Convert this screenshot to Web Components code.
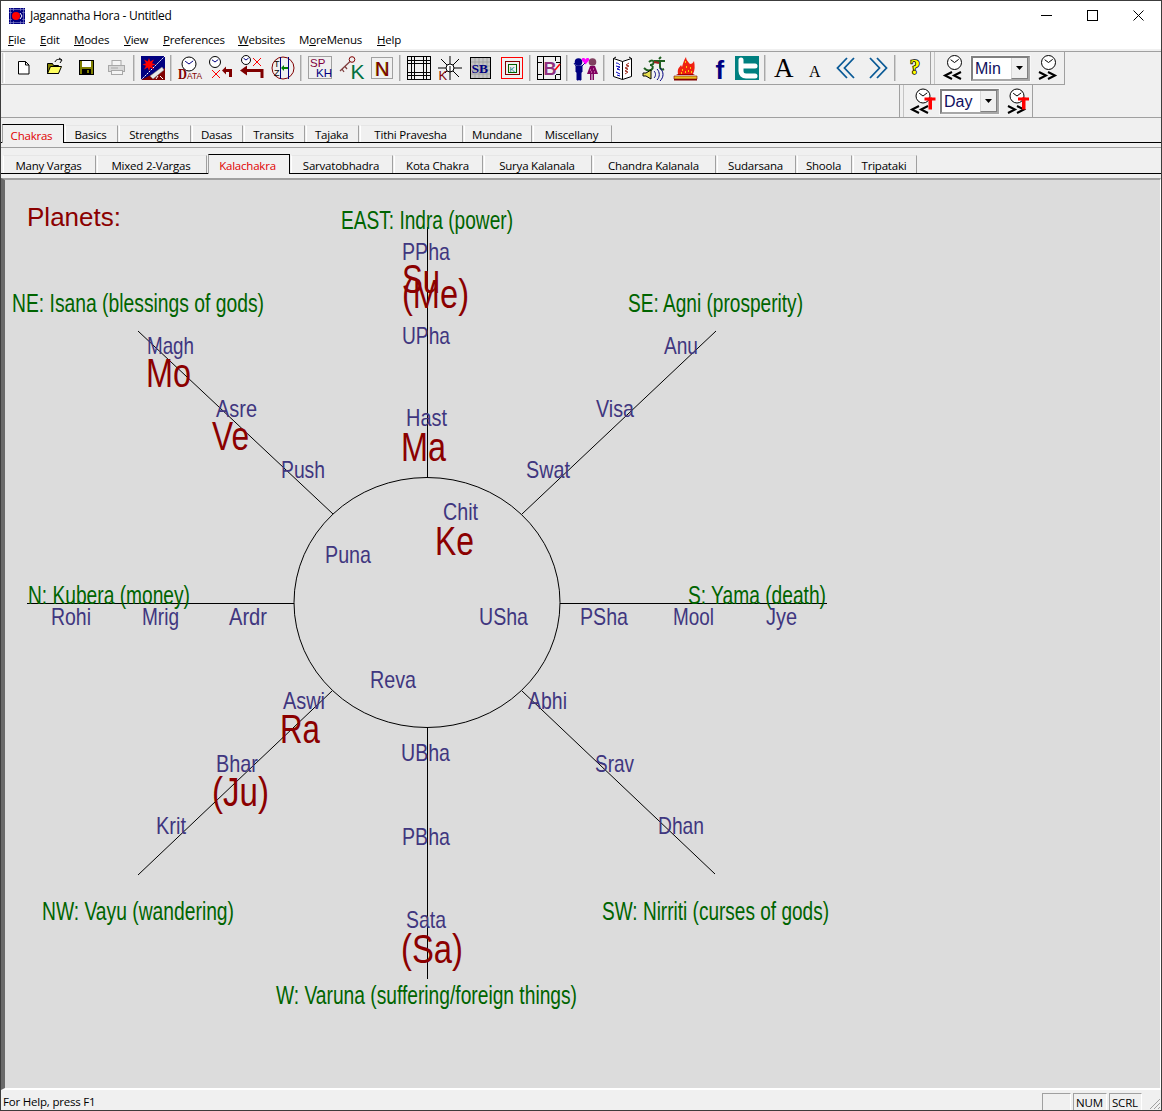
<!DOCTYPE html>
<html>
<head>
<meta charset="utf-8">
<title>Jagannatha Hora - Untitled</title>
<style>
html, body { margin: 0; padding: 0; background: #f0f0f0; overflow: hidden; }
body { font-family: "Open Sans", "Noto Sans", sans-serif; font-size: 11.5px; color: #000; }
</style>
</head>
<body>
<jh-window>
	<jh-titlebar slot="top">Jagannatha Hora - Untitled</jh-titlebar>
	<jh-menubar slot="top">
		<jh-menu width="18"><u>F</u>ile</jh-menu>
		<jh-menu width="20"><u>E</u>dit</jh-menu>
		<jh-menu width="36"><u>M</u>odes</jh-menu>
		<jh-menu width="25"><u>V</u>iew</jh-menu>
		<jh-menu width="61"><u>P</u>references</jh-menu>
		<jh-menu width="47"><u>W</u>ebsites</jh-menu>
		<jh-menu width="64">M<u>o</u>reMenus</jh-menu>
		<jh-menu width="25"><u>H</u>elp</jh-menu>
	</jh-menubar>
	<jh-toolbars slot="top">
		<jh-toolrow style="width:1063px">
			<jh-grip></jh-grip>
			<jh-btn icon="new"></jh-btn><jh-btn icon="open"></jh-btn><jh-btn icon="save"></jh-btn><jh-btn icon="print"></jh-btn>
			<jh-sep></jh-sep>
			<jh-btn icon="astro"></jh-btn>
			<jh-sep></jh-sep>
			<jh-btn icon="data"></jh-btn><jh-btn icon="clockx"></jh-btn><jh-btn icon="clockarrow"></jh-btn><jh-btn icon="tz"></jh-btn>
			<jh-sep></jh-sep>
			<jh-btn icon="spkh"></jh-btn><jh-btn icon="key"></jh-btn><jh-btn icon="n"></jh-btn>
			<jh-sep></jh-sep>
			<jh-btn icon="grid"></jh-btn><jh-btn icon="sun"></jh-btn><jh-btn icon="sb"></jh-btn><jh-btn icon="kbox"></jh-btn>
			<jh-sep></jh-sep>
			<jh-btn icon="bgrid"></jh-btn>
			<jh-sep></jh-sep>
			<jh-btn icon="couple"></jh-btn>
			<jh-sep></jh-sep>
			<jh-btn icon="book"></jh-btn><jh-btn icon="om"></jh-btn><jh-btn icon="fire"></jh-btn><jh-btn icon="fb"></jh-btn><jh-btn icon="tw"></jh-btn>
			<jh-sep></jh-sep>
			<jh-btn icon="abig"></jh-btn><jh-btn icon="asmall"></jh-btn><jh-btn icon="prev"></jh-btn><jh-btn icon="next"></jh-btn>
			<jh-sep></jh-sep>
			<jh-btn icon="help"></jh-btn>
			<jh-dblgrip></jh-dblgrip>
			<jh-btn icon="clockback" narrow></jh-btn>
			<jh-combo>Min</jh-combo>
			<jh-btn icon="clockfwd" narrow></jh-btn>
		</jh-toolrow>
		<jh-toolrow style="width:1029px;padding-right:2px;justify-content:flex-end">
			<jh-dblgrip></jh-dblgrip>
			<jh-btn icon="tback" narrow></jh-btn>
			<jh-combo>Day</jh-combo>
			<jh-btn icon="tfwd" narrow></jh-btn>
		</jh-toolrow>
	</jh-toolbars>
	<jh-tabs slot="top" level="1">
		<jh-tab width="62" active>Chakras</jh-tab>
		<jh-tab width="53">Basics</jh-tab>
		<jh-tab width="72">Strengths</jh-tab>
		<jh-tab width="51">Dasas</jh-tab>
		<jh-tab width="61">Transits</jh-tab>
		<jh-tab width="53">Tajaka</jh-tab>
		<jh-tab width="103">Tithi Pravesha</jh-tab>
		<jh-tab width="68">Mundane</jh-tab>
		<jh-tab width="79">Miscellany</jh-tab>
	</jh-tabs>
	<jh-tabs slot="top" level="2">
		<jh-tab width="93">Many Vargas</jh-tab>
		<jh-tab width="110">Mixed 2-Vargas</jh-tab>
		<jh-tab width="82" active>Kalachakra</jh-tab>
		<jh-tab width="102">Sarvatobhadra</jh-tab>
		<jh-tab width="89">Kota Chakra</jh-tab>
		<jh-tab width="108">Surya Kalanala</jh-tab>
		<jh-tab width="123">Chandra Kalanala</jh-tab>
		<jh-tab width="79">Sudarsana</jh-tab>
		<jh-tab width="55">Shoola</jh-tab>
		<jh-tab width="64">Tripataki</jh-tab>
	</jh-tabs>
	<jh-chart></jh-chart>
	<jh-statusbar slot="bottom">For Help, press F1</jh-statusbar>
</jh-window>

<script>
// small helpers for the toolbar pictures
function clock(cx, cy, r, hands) {
	return `<circle cx="${cx}" cy="${cy}" r="${r}" fill="#fff" stroke="#000"/>` +
		`<path d="M${cx} ${cy}L${cx + r * 0.6} ${cy - r * 0.45}M${cx} ${cy}L${cx - r * 0.55} ${cy - r * 0.4}" stroke="${hands || "#000"}" fill="none"/>`;
}
function redX(cx, cy, s) {
	return `<path d="M${cx - s} ${cy - s}L${cx + s} ${cy + s}M${cx + s} ${cy - s}L${cx - s} ${cy + s}" stroke="#f00" fill="none"/>`;
}
function chev(x, y, dir) {
	let w = 7, h = 3.5, d = dir < 0
		? `M${x + w} ${y}L${x} ${y + h}L${x + w} ${y + 2 * h}`
		: `M${x} ${y}L${x + w} ${y + h}L${x} ${y + 2 * h}`;
	return `<path d="${d}" stroke="#000" stroke-width="2" fill="none"/>`;
}
function redT(x, y) {
	return `<rect x="${x}" y="${y}" width="11" height="3" fill="#f00"/><rect x="${x + 4}" y="${y}" width="3.5" height="12" fill="#f00"/>`;
}
const txt = (x, y, size, fill, s, extra) =>
	`<text x="${x}" y="${y}" font-size="${size}" fill="${fill}" font-family="Liberation Sans, sans-serif" ${extra || ""}>${s}</text>`;

const ICONS = {
	new: `<path d="M7.5 5.5h7l3.5 3.5v9h-10.500z" fill="#fff" stroke="#000"/><path d="M14.500 5.500v3.500h3.500" fill="none" stroke="#000"/>`,
	open: `<path d="M5.500 7.500h5l1 2h5v8h-11z" fill="#808000" stroke="#000"/><path d="M5.500 17.500l3-7h11l-3 7z" fill="#ffff60" stroke="#000"/><path d="M13 6c1-3 4-3 6-2M17 2l3 2-2 3" fill="none" stroke="#000"/>`,
	save: `<rect x="6.500" y="4.500" width="14" height="14" fill="#808000" stroke="#000"/><rect x="9" y="5" width="9" height="6" fill="#fff"/><rect x="9" y="13" width="9" height="5" fill="#000"/><rect x="14" y="14" width="2" height="3" fill="#808000"/>`,
	print: `<rect x="8" y="4.500" width="9" height="5" fill="#f4f4f4" stroke="#a8a8a8"/><rect x="4.500" y="9.500" width="16" height="6" fill="#d8d8d8" stroke="#a8a8a8"/><rect x="7.500" y="14.500" width="11" height="4" fill="#f4f4f4" stroke="#a8a8a8"/><path d="M7 12h7" stroke="#a8a8a8"/>`,
	astro: `<rect width="24" height="24" fill="#000080"/><path d="M24 12V24H0z" fill="#800000"/><path d="M24 0L0 24" stroke="#fff" stroke-dasharray="2 1" fill="none"/>
		<path d="M8 2l1.200 3.500 3.800-2-2 3.800 3.500 1.200-3.500 1.200 2 3.800-3.800-2L8 15l-1.200-3.500-3.800 2 2-3.800L1.500 8.500 5 7.300l-2-3.800 3.800 2z" fill="#f00"/>
		<path d="M9 20l12-9 2 3-11 9z" fill="#e8e8e8" stroke="#777" stroke-width=".5"/><path d="M17 20l-2 3M19 20l3 3" stroke="#fff" fill="none"/>`,
	data: clock(11, 8, 7, "#000080") +
		`<text x="0" y="22.500" textLength="24" lengthAdjust="spacingAndGlyphs" font-family="Liberation Serif, serif" font-weight="bold" fill="#800000" font-size="14">D<tspan font-size="9.500" font-family="Liberation Sans, sans-serif" font-weight="normal">ATA</tspan></text>`,
	clockx: clock(6, 6, 5.500, "#000080") + redX(7, 18, 4) +
		`<path d="M21.500 21V14.500H15" stroke="#800000" stroke-width="3" fill="none"/><path d="M17 10.500v8l-4-4z" fill="#800000"/>`,
	clockarrow: clock(6, 4, 4.500, "#000080") + redX(17, 6, 4) +
		`<path d="M22 22V14.500H5" stroke="#800000" stroke-width="3" fill="none"/><path d="M7 9.500v10L0 14.500z" fill="#800000"/>`,
	tz: `<circle cx="12" cy="12" r="11" fill="none" stroke="#800000"/><path d="M9.500 1v22M17.500 1v22" stroke="#000080" fill="none"/><path d="M11 12h6" stroke="#008000" stroke-width="2"/><path d="M13 9v6l-3-3z" fill="#008000"/>` +
		txt(3, 10.500, 9, "#000", "T") + txt(3, 20, 9, "#000", "Z"),
	spkh: `<rect x=".5" y=".5" width="23" height="22" fill="#f0f0f0" stroke="#a0a0a0"/>` +
		txt(2, 11, 11.500, "#800040", "SP") + txt(8, 20.500, 11.500, "#000080", "KH"),
	key: `<circle cx="13" cy="3.500" r="2.800" fill="none" stroke="#800000"/><path d="M11 5.500L1 15M3 13l2 3M6 10.500l2 2.500" stroke="#804040" stroke-width="1.300" fill="none"/>` +
		txt(11.500, 23, 21, "#007040", "K"),
	n: `<rect x="1.500" y="1.500" width="21" height="21" fill="#f0f0f0" stroke="#a0a0a0"/>` +
		txt(4.500, 19.500, 20, "#808000", "N") + txt(5.300, 19.500, 20, "#800000", "N"),
	grid: `<rect x=".5" y=".5" width="23" height="23" fill="none" stroke="#000"/><rect x="7.500" y="7.500" width="9" height="9" fill="none" stroke="#000"/>
		<path d="M4.500 0V24M19.500 0V24M0 4.500H24M0 19.500H24M7.500 0V7M16.500 0V7M7.500 17V24M16.500 17V24M0 7.500H7M0 16.500H7M17 7.500H24M17 16.500H24" stroke="#000" fill="none"/>`,
	sun: `<circle cx="12" cy="12" r="4" fill="#fff" stroke="#000"/><path d="M12 8V0M12 16V10M12 16V24M16 12H24M8 12H0M15 9L21 3M9 9L3 3M15 15L21 21M9 15L7 17" stroke="#000" fill="none"/>` +
		txt(.5, 24, 13, "#800000", "K"),
	sb: `<rect x="1.500" y="1.500" width="20" height="21" fill="#c4c4c4" stroke="#000"/><path d="M2 6H21M2 10H21M2 14H21M2 18H21M6 2V22M10 2V22M14 2V22M18 2V22" stroke="#9a9a9a" stroke-width=".7"/>` +
		`<text x="2.500" y="16.500" font-family="Liberation Serif, serif" font-weight="bold" font-size="13.500" fill="#000080">SB</text>`,
	kbox: `<rect x="1.500" y="1.500" width="21" height="21" fill="none" stroke="#f00" stroke-width="1"/><rect x="5.500" y="5.500" width="14" height="13" fill="none" stroke="#800000"/><rect x="8.500" y="8.500" width="8" height="8" fill="none" stroke="#006000"/>` +
		txt(9.500, 15.500, 8, "#008080", "K"),
	bgrid: `<rect x=".5" y=".5" width="23" height="23" fill="none" stroke="#000"/><path d="M6.500 0V24M18.500 0V5M0 6.500H5M19 6.500H24M0 18.500H5M19 18.500H24M18.500 19V24" stroke="#000" fill="none"/>` +
		txt(6.500, 18.500, 18, "#903080", "B", 'font-weight="bold"') + `<path d="M18 14l5-6" stroke="#f00" stroke-width="1.500"/>`,
	couple: `<circle cx="4.500" cy="6" r="3.800" fill="#000080"/><path d="M2 10h6v6h-1v8h-1.500v-7h-1v7H3v-8H2zM2 10L0 7M8 10l3-3" fill="#000080" stroke="#000080"/>
		<path d="M11.500 3.500c-1.500-3-5.500-1-3 1.500l3 3.500 3-3.500c2.500-2.500-1.500-4.500-3-1.500z" fill="#f0f"/>
		<circle cx="18.500" cy="6" r="3.800" fill="#804060"/><path d="M16 10h5l3 8h-4v6h-1.500v-6h-1v6H16v-6h-3z" fill="#800060"/><path d="M16 14h1M19 13h1M17 16h1M20 16h1" stroke="#f0a0d0"/>`,
	book: `<path d="M2.500 2.500l9 3 9-3v18l-9 3-9-3z" fill="#fff" stroke="#000"/><path d="M11.500 5.500v18M2.500 2.500L5 1M20.500 2.500L18 1" stroke="#000" fill="none"/>
		<path d="M5 7c2 0 3 1 4 2M5 10l4 1-3 2 3 1M5 16l4 2M6 19l3 1" stroke="#0000c0" fill="none"/><path d="M18 7l-3 2 3 1-4 2 3 1-3 2 3 1-3 2" stroke="#a03020" fill="none"/>`,
	om: `<path d="M7 6c3-3 6-1 4 2-1 1-3 1-3 1 3 0 4 3 1 5-2 1-5 0-7-2M12 5h11M18 5v6c0 2 2 3 4 2M17 3l2-2" stroke="#206020" stroke-width="2" fill="none"/><path d="M12 6l5 1" stroke="#a02020" stroke-width="2"/>
		<path d="M1 17h3l5-3v9l-5-3H1z" fill="#e8e050" stroke="#000"/><path d="M12 15c2 2 2 5 0 7M15 13c3 3 3 8 0 11M18 12c4 4 4 9 0 13" stroke="#000080" fill="none"/>`,
	fire: `<path d="M1 23h23v1.500H1z" fill="#800000"/><path d="M1 20h23v3H1z" fill="#e8c020" stroke="#800000" stroke-width=".6"/><path d="M3 19l4-2h11l4 2z" fill="#a00000"/>
		<path d="M5 18c-1-6 2-7 3-9l1 2c1-4 2-7 4-10 0 3 2 4 3 6l1 1c2 0 3-1 4-3 1 5 1 9-1 13z" fill="#f02010"/><path d="M9 14h1M13 11h1M15 15h1M12 16h1M17 12h1M12 6h1M8 17h1M18 16h1" stroke="#ff0" stroke-width="1.500"/>`,
	fb: `<text x="11.500" y="23" font-family="Liberation Sans, sans-serif" font-weight="bold" font-size="26" fill="#000080">f</text>`,
	tw: `<rect width="24" height="24" fill="#008080"/><path d="M6 4v11c0 3 2 5 5 5h9" stroke="#fff" stroke-width="5" stroke-linecap="round" fill="none"/><path d="M7 10h13" stroke="#fff" stroke-width="5" stroke-linecap="round" fill="none"/>`,
	abig: `<text x="2" y="21" font-family="Liberation Serif, serif" font-size="27" fill="#000">A</text>`,
	asmall: `<text x="6" y="21" font-family="Liberation Serif, serif" font-size="16" fill="#000">A</text>`,
	prev: `<path d="M13 2L3.500 12 13 22M20 2L10.500 12 20 22" stroke="#0a5a96" stroke-width="1.800" fill="none"/>`,
	next: `<path d="M5 2l9.500 10L5 22M12 2l9.500 10L12 22" stroke="#0a5a96" stroke-width="1.800" fill="none"/>`,
	help: `<text x="8" y="18" font-family="Liberation Serif, serif" font-weight="bold" font-size="20" fill="#ff0" stroke="#000" stroke-width="1.600" paint-order="stroke">?</text>`,
	clockback: clock(12.500, 6.500, 7) + chev(3, 16, -1) + chev(12, 16, -1),
	clockfwd: clock(12.500, 6.500, 7) + chev(3, 16, 1) + chev(12, 16, 1),
	tback: clock(12, 7, 7) + chev(1, 17, -1) + chev(10, 17, -1) + redT(13.500, 8.500),
	tfwd: clock(12, 7, 7) + chev(3, 17, 1) + chev(12, 17, 1) + redT(13, 8.500)
};

class JhWindow extends HTMLElement {
	constructor() {
		super();
		this.attachShadow({ mode: "open" }).innerHTML = `
			<style>
			:host { display: flex; flex-direction: column; box-sizing: border-box; width: 1162px; height: 1111px; border: 1px solid #3c3c3c; background: #f0f0f0; }
			.main { flex: 1; min-height: 0; display: flex; }
			</style>
			<slot name="top"></slot>
			<div class="main"><slot></slot></div>
			<slot name="bottom"></slot>`;
	}
}

class JhTitlebar extends HTMLElement {
	constructor() {
		super();
		this.attachShadow({ mode: "open" }).innerHTML = `
			<style>
			:host { display: flex; align-items: center; height: 29px; background: #fff; font-size: 12px; }
			svg { display: block; }
			.logo { margin: 0 5px 0 8px; }
			.title { flex: 1; letter-spacing: -.26px; }
			.ctl { width: 46px; height: 29px; display: flex; align-items: center; justify-content: center; }
			</style>
			<svg class="logo" width="16" height="16" viewBox="0 0 16 16">
				<rect width="16" height="16" fill="#000080"/>
				<path d="M1.500 0V16M4.500 0V16M11.500 0V16M14.500 0V16M0 1.500H16M0 4.500H16M0 11.500H16M0 14.500H16" stroke="#9090d0" stroke-width=".6"/>
				<rect x="3" y="3" width="10" height="10" fill="#000080"/>
				<circle cx="7" cy="8" r="4" fill="#f00"/><path d="M11 5l2 3-2 3" stroke="#fff" fill="none"/>
			</svg>
			<span class="title"><slot></slot></span>
			<span class="ctl"><svg width="11" height="11"><path d="M0 5.500H11" stroke="#000"/></svg></span>
			<span class="ctl"><svg width="11" height="11"><rect x=".5" y=".5" width="10" height="10" fill="none" stroke="#000"/></svg></span>
			<span class="ctl"><svg width="11" height="11"><path d="M.5 .5L10.500 10.500M10.500 .5L.5 10.500" stroke="#000"/></svg></span>`;
	}
}

class JhMenubar extends HTMLElement {
	constructor() {
		super();
		this.attachShadow({ mode: "open" }).innerHTML = `
			<style>:host { display: flex; gap: 14px; height: 19px; padding-left: 7px; background: #fff; font-size: 11.500px; letter-spacing: -.2px; line-height: 20px; }</style>
			<slot></slot>`;
	}
}

class JhMenu extends HTMLElement {
	constructor() {
		super();
		this.attachShadow({ mode: "open" }).innerHTML = `<style>:host { display: block; white-space: nowrap; }</style><slot></slot>`;
	}
	connectedCallback() { this.style.width = this.getAttribute("width") + "px"; }
}

class JhToolbars extends HTMLElement {
	constructor() {
		super();
		this.attachShadow({ mode: "open" }).innerHTML = `
			<style>:host { display: block; padding-top: 2px; }
			.wrap { border-top: 1px solid #a0a0a0; border-bottom: 1px solid #a0a0a0; }</style>
			<div class="wrap"><slot></slot></div>`;
	}
}

class JhToolrow extends HTMLElement {
	constructor() {
		super();
		this.attachShadow({ mode: "open" }).innerHTML = `
			<style>:host { display: flex; align-items: center; box-sizing: content-box; height: 32px; border-right: 1px solid #a0a0a0; }
			:host(:first-child) { border-bottom: 1px solid #a0a0a0; }</style>
			<slot></slot>`;
	}
}

class JhGrip extends HTMLElement {
	constructor() {
		super();
		this.attachShadow({ mode: "open" }).innerHTML = `
			<style>:host { display: block; width: 3px; height: 30px; margin: 0 2px 0 1px; border-left: 1px solid #c8c8c8; border-right: 1px solid #fff; box-sizing: border-box; }</style>`;
	}
}

class JhDblgrip extends HTMLElement {
	constructor() {
		super();
		this.attachShadow({ mode: "open" }).innerHTML = `
			<style>:host { display: block; box-sizing: border-box; width: 5px; height: 32px; margin: 0 5px 0 1px; border-left: 1px solid #a0a0a0; border-right: 1px solid #c4c4c4; }</style>`;
	}
}

class JhSep extends HTMLElement {
	constructor() {
		super();
		this.attachShadow({ mode: "open" }).innerHTML = `
			<style>:host { display: block; box-sizing: border-box; width: 2px; height: 26px; margin: 0 2px; background: #a8a8a8; border-right: 1px solid #d0d0d0; }</style>`;
	}
}

class JhBtn extends HTMLElement {
	constructor() {
		super();
		this.attachShadow({ mode: "open" }).innerHTML = `
			<style>
			:host { display: flex; align-items: center; justify-content: center; width: 31px; height: 32px; flex: none; }
			:host([narrow]) { width: 27px; }
			svg { display: block; overflow: visible; }
			</style>
			<svg width="24" height="24" viewBox="0 0 24 24"></svg>`;
	}
	connectedCallback() {
		this.shadowRoot.querySelector("svg").innerHTML = ICONS[this.getAttribute("icon")] || "";
	}
}

class JhCombo extends HTMLElement {
	constructor() {
		super();
		this.attachShadow({ mode: "open" }).innerHTML = `
			<style>
			:host { display: flex; box-sizing: border-box; flex: none; width: 59px; height: 25px; margin: 0 4px; background: #fff; border: 2px solid #808080; border-right-color: #a8a8a8; border-bottom-color: #a8a8a8; outline: 1px solid #f8f8f8; font: 16px "Liberation Sans", Arial, sans-serif; color: #101060; }
			.v { flex: 1; padding-left: 2px; line-height: 21px; }
			.b { width: 17px; display: flex; align-items: center; justify-content: center; background: #f0f0f0; border-left: 1px solid #d8d8d8; border-bottom: 1px solid #808080; border-right: 1px solid #808080; box-sizing: border-box; }
			</style>
			<span class="v"><slot></slot></span>
			<span class="b"><svg width="7" height="4"><path d="M0 0H7L3.500 4z" fill="#000"/></svg></span>`;
	}
}

class JhTabs extends HTMLElement {
	constructor() {
		super();
		this.attachShadow({ mode: "open" }).innerHTML = `
			<style>
			:host { display: block; letter-spacing: -.22px; }
			:host([level="2"]) { margin: 4px 0; border-top: 1px solid #a0a0a0; }
			.strip { display: flex; align-items: flex-end; box-sizing: content-box; border-bottom: 1px solid #000; }
			:host([level="1"]) .strip { height: 24px; padding-left: 1px; }
			:host([level="2"]) .strip { height: 25px; padding-left: 2px; }
			</style>
			<div class="strip"><slot></slot></div>`;
	}
}

class JhTab extends HTMLElement {
	constructor() {
		super();
		this.attachShadow({ mode: "open" }).innerHTML = `
			<style>
			:host { display: block; box-sizing: border-box; flex: none; height: 17px; margin-right: 1px; padding: 1px 2px 0 0; overflow: hidden; text-align: center; white-space: nowrap; border-top: 1px solid #e6e6e6; border-left: 1px solid #fff; border-right: 1px solid #a0a0a0; line-height: 16px; }
			:host([active]) { height: 19px; margin-bottom: -1px; border-top-color: #000; border-right-color: #000; border-left-color: #a0a0a0; background: #f0f0f0; color: #e00000; padding-top: 3px; padding-right: 3px; }
			:host-context(jh-tabs[level="2"]) { height: 18px; padding-top: 2px; }
			:host-context(jh-tabs[level="2"]):host([active]) { height: 20px; padding-top: 3px; }
			</style>
			<slot></slot>`;
	}
	connectedCallback() { this.style.width = this.getAttribute("width") + "px"; }
}

// every coordinate below is in page pixels, the viewBox takes care of the offset
const GREEN = [
	["EAST: Indra (power)", 341, 229, 172], ["NE: Isana (blessings of gods)", 12, 312, 252],
	["SE: Agni (prosperity)", 628, 312, 175], ["N: Kubera (money)", 28, 604, 162],
	["S: Yama (death)", 688, 604, 138], ["NW: Vayu (wandering)", 42, 920, 192],
	["SW: Nirriti (curses of gods)", 602, 920, 227], ["W: Varuna (suffering/foreign things)", 276, 1004, 301]
];
const STARS = [
	["PPha", 402, 260, 48], ["UPha", 402, 344, 48], ["Hast", 406, 426, 41], ["Chit", 443, 520, 35],
	["Puna", 325, 563, 46], ["USha", 479, 625, 49], ["Reva", 370, 688, 46], ["UBha", 401, 761, 49],
	["PBha", 402, 845, 48], ["Sata", 406, 928, 40], ["Magh", 147, 354, 47], ["Asre", 216, 417, 41],
	["Push", 281, 478, 44], ["Anu", 664, 354, 34], ["Visa", 596, 417, 38], ["Swat", 526, 478, 44],
	["Rohi", 51, 625, 40], ["Mrig", 142, 625, 37], ["Ardr", 229, 625, 38], ["PSha", 580, 625, 48],
	["Mool", 673, 625, 41], ["Jye", 766, 625, 31], ["Aswi", 283, 709, 42], ["Bhar", 216, 772, 42],
	["Krit", 156, 834, 30], ["Abhi", 528, 709, 39], ["Srav", 595, 772, 39], ["Dhan", 658, 834, 46]
];
const PLANETS = [
	["Mo", 146, 387, 45], ["Ve", 212, 450, 37], ["Su", 402, 293, 38], ["(Me)", 402, 308, 67],
	["Ma", 401, 461, 45], ["Ke", 435, 555, 39], ["Ra", 280, 743, 40], ["(Ju)", 212, 806, 57], ["(Sa)", 401, 963, 62]
];
const LINES = [
	[427.5, 227, 427.5, 477], [427.5, 728, 427.5, 979], [27, 603.5, 294, 603.5], [560, 603.5, 827, 603.5],
	[333, 514, 138, 331], [522, 514, 716, 331], [332, 691, 138, 875], [522, 691, 715, 874]
];

class JhChart extends HTMLElement {
	constructor() {
		super();
		this.attachShadow({ mode: "open" }).innerHTML = `
			<style>
			:host { display: block; flex: 1; min-width: 0; box-sizing: border-box; background: #dcdcdc; border-top: 2px solid #a0a0a0; border-left: 4px solid #6a6a6a; border-right: 1px solid #fff; border-bottom: 2px solid #fff; overflow: hidden; }
			svg { display: block; }
			text { font-family: "Liberation Sans", Arial, sans-serif; }
			</style>
			<svg width="1155" height="908" viewBox="5 180 1155 908"></svg>`;
	}
	connectedCallback() {
		const label = (rows, size, fill) => rows.map(r =>
			`<text x="${r[1]}" y="${r[2]}" font-size="${size}" fill="${fill}" textLength="${r[3]}" lengthAdjust="spacingAndGlyphs">${r[0]}</text>`).join("");
		this.shadowRoot.querySelector("svg").innerHTML =
			`<ellipse cx="427" cy="602.5" rx="133" ry="125" fill="none" stroke="#000"/>` +
			LINES.map(l => `<line x1="${l[0]}" y1="${l[1]}" x2="${l[2]}" y2="${l[3]}" stroke="#000"/>`).join("") +
			label([["Planets:", 27, 226, 94]], 25, "#8b0000") +
			label(GREEN, 25, "#006400") +
			label(STARS, 24, "#40367f") +
			label(PLANETS, 40, "#8b0000");
	}
}

class JhStatusbar extends HTMLElement {
	constructor() {
		super();
		this.attachShadow({ mode: "open" }).innerHTML = `
			<style>
			:host { display: flex; align-items: flex-end; height: 20px; font-size: 11.500px; letter-spacing: -.2px; overflow: hidden; }
			.msg { flex: 1; padding-left: 2px; line-height: 17px; }
			.pane { box-sizing: border-box; height: 17px; margin-right: 2px; padding-left: 2px; border-top: 1px solid #a0a0a0; border-left: 1px solid #a0a0a0; border-right: 1px solid #fff; line-height: 17px; text-align: left; overflow: hidden; }
			.grip { width: 19px; height: 17px; }
			</style>
			<span class="msg"><slot></slot></span>
			<span class="pane" style="width:29px"></span>
			<span class="pane" style="width:34px">NUM</span>
			<span class="pane" style="width:33px;margin-right:0">SCRL</span>
			<svg class="grip" viewBox="0 0 19 17"><path d="M8 16L18 6M12 16L18 10M16 16L18 14" stroke="#a0a0a0" fill="none"/></svg>`;
	}
}

customElements.define("jh-window", JhWindow);
customElements.define("jh-titlebar", JhTitlebar);
customElements.define("jh-menubar", JhMenubar);
customElements.define("jh-menu", JhMenu);
customElements.define("jh-toolbars", JhToolbars);
customElements.define("jh-toolrow", JhToolrow);
customElements.define("jh-grip", JhGrip);
customElements.define("jh-dblgrip", JhDblgrip);
customElements.define("jh-sep", JhSep);
customElements.define("jh-btn", JhBtn);
customElements.define("jh-combo", JhCombo);
customElements.define("jh-tabs", JhTabs);
customElements.define("jh-tab", JhTab);
customElements.define("jh-chart", JhChart);
customElements.define("jh-statusbar", JhStatusbar);
</script>
</body>
</html>
